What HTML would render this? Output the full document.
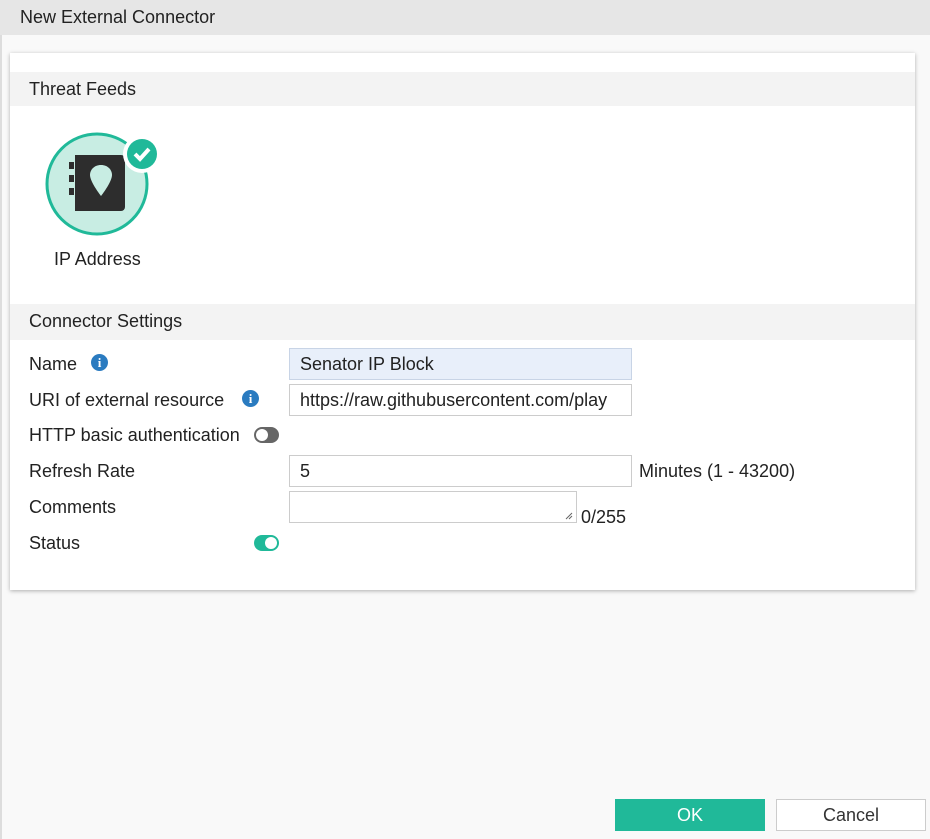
<!DOCTYPE html>
<html><head><style>
*{box-sizing:border-box;margin:0;padding:0}
body{width:930px;height:839px;background:#f9f9f9;font-family:"Liberation Sans",sans-serif;color:#333;position:relative;overflow:hidden;font-size:18px}
.title{position:absolute;left:0;top:0;width:930px;height:35px;background:#e6e6e6;padding:7px 0 0 20px;font-size:18px;color:#222}
.lb{position:absolute;left:0;top:35px;width:2px;height:804px;background:#ddd}
.panel{position:absolute;left:10px;top:53px;width:905px;height:537px;background:#fff;box-shadow:0 1px 4px rgba(0,0,0,.3)}
.sh{position:absolute;left:0;width:905px;height:34px;background:#f3f3f3;padding:7px 0 0 19px;font-size:18px;color:#222}
.lab{position:absolute;left:19px;font-size:18px;color:#222}
.inp{position:absolute;left:279px;height:32px;border:1px solid #ccc;background:#fff;padding:5px 0 0 10px;font-size:18px;color:#222;white-space:nowrap;overflow:hidden}
.info{position:absolute;width:17px;height:17px;border-radius:50%;background:#2a7bc0;color:#fff;font-weight:bold;font-size:13px;text-align:center;line-height:17px;font-family:"Liberation Serif",serif}
.tog{position:absolute;left:244px;width:25px;height:16px;border-radius:8px}
.tog i{position:absolute;top:2px;width:12px;height:12px;border-radius:50%;background:#fff}
.btn{position:absolute;top:799px;width:150px;height:32px;text-align:center;line-height:32px;font-size:18px}
</style></head><body>
<div class="title">New External Connector</div>
<div class="lb"></div>
<div class="panel">
 <div class="sh" style="top:19px">Threat Feeds</div>
 <svg style="position:absolute;left:35px;top:79px" width="115" height="106" viewBox="0 0 115 106">
  <circle cx="52" cy="52" r="50" fill="#c8ede3" stroke="#20b999" stroke-width="3"/>
  <path d="M30 23h46a4 4 0 0 1 4 4v48a4 4 0 0 1-4 4H30z" fill="#2d2d2d"/>
  <rect x="24" y="30" width="5" height="7" fill="#2d2d2d"/><rect x="24" y="43" width="5" height="7" fill="#2d2d2d"/><rect x="24" y="56" width="5" height="7" fill="#2d2d2d"/>
  <path d="M56 33c-7 0-11 5-11 10 0 7 11 21 11 21s11-14 11-21c0-5-4-10-11-10z" fill="#c8ede3"/>
  <circle cx="97" cy="22" r="19" fill="#fff"/>
  <circle cx="97" cy="22" r="15" fill="#20b999"/>
  <path d="M90 22l5 5 9-10" stroke="#fff" stroke-width="4" fill="none"/>
 </svg>
 <div class="lab" style="left:44px;top:196px">IP Address</div>
 <div class="sh" style="top:251px;height:36px">Connector Settings</div>
 <div class="lab" style="top:301px">Name</div>
 <div class="info" style="left:81px;top:301px">i</div>
 <div class="inp" style="top:295px;width:343px;background:#e8effa;border-color:#c8d4e6">Senator IP Block</div>
 <div class="lab" style="top:337px">URI of external resource</div>
 <div class="info" style="left:232px;top:337px">i</div>
 <div class="inp" style="top:331px;width:343px">https://raw.githubusercontent.com/play</div>
 <div class="lab" style="top:372px">HTTP basic authentication</div>
 <div class="tog" style="top:374px;background:#666"><i style="left:2px"></i></div>
 <div class="lab" style="top:408px">Refresh Rate</div>
 <div class="inp" style="top:402px;width:343px">5</div>
 <div class="lab" style="left:629px;top:408px">Minutes (1 - 43200)</div>
 <div class="lab" style="top:444px">Comments</div>
 <div class="inp" style="top:438px;width:288px"></div>
 <svg style="position:absolute;left:555px;top:459px" width="8" height="8"><path d="M1 7L7 1M4 7L7 4" stroke="#666"/></svg>
 <div class="lab" style="left:571px;top:454px">0/255</div>
 <div class="lab" style="top:480px">Status</div>
 <div class="tog" style="top:482px;background:#20b999"><i style="left:11px"></i></div>
</div>
<div class="btn" style="left:615px;background:#20b999;color:#fff">OK</div>
<div class="btn" style="left:776px;background:#fff;border:1px solid #ccc;color:#333;line-height:30px">Cancel</div>
</body></html>
